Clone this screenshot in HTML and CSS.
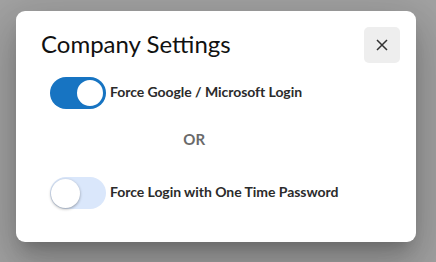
FILE: index.html
```html
<!DOCTYPE html>
<html lang="en">
<head>
    <meta charset="UTF-8">
    <meta name="viewport" content="width=device-width, initial-scale=1.0">
    <title>Company Settings</title>
    <link rel="stylesheet" href="styles.css">
</head>
<body>
    <div class="modal">
        <div class="modal-header">
            <h2>Company Settings</h2>
            <button class="btn-close" aria-label="close">
                <svg width="12" height="12" viewBox="0 0 12 12">
                    <path d="M1 1 L11 11 M11 1 L1 11" stroke="#333" stroke-width="1.5" fill="none"/>
                </svg>
            </button>
        </div>
        <div class="options">
            <label class="row">
                <span class="switch on"><span class="thumb"></span></span>
                <span class="label">Force Google / Microsoft Login</span>
            </label>
            <p class="or">OR</p>
            <label class="row">
                <span class="switch"><span class="thumb"></span></span>
                <span class="label">Force Login with One Time Password</span>
            </label>
        </div>
    </div>
</body>
</html>
```

FILE: styles.css
```css
body {
    margin: 0;
    padding: 11px 0 0 16px;
    background-color: #a2a2a2;
    font-family: Lato, "Liberation Sans", sans-serif;
    min-height: 262px;
    box-sizing: border-box;
}

.modal {
    width: 400px;
    box-sizing: border-box;
    background-color: #fff;
    border-radius: 9px;
    padding: 16px 16px 33px 24px;
    box-shadow: 0 11px 15px -7px rgba(0, 0, 0, 0.2), 0 24px 38px 3px rgba(0, 0, 0, 0.14), 0 9px 46px 8px rgba(0, 0, 0, 0.12);
}

.modal-header {
    display: flex;
    justify-content: space-between;
    align-items: center;
    height: 36px;
}

.modal-header h2 {
    margin: 0 0 0 1px;
    padding-bottom: 4px;
    font-size: 24px;
    font-weight: 400;
    color: #111;
}

.btn-close {
    width: 36px;
    height: 36px;
    border: none;
    border-radius: 5px;
    background-color: #eeeeee;
    display: flex;
    align-items: center;
    justify-content: center;
    padding: 0;
    cursor: pointer;
}

.options {
    display: inline-flex;
    flex-direction: column;
    margin: 14px 0 0 10px;
}

.row {
    display: flex;
    align-items: center;
    gap: 4px;
    cursor: pointer;
}

.switch {
    width: 56px;
    height: 32px;
    border-radius: 16px;
    background-color: #dae7fb;
    display: flex;
    align-items: center;
    padding: 0 1px;
    box-sizing: border-box;
}

.switch .thumb {
    width: 29px;
    height: 29px;
    border-radius: 50%;
    background-color: #fff;
    box-shadow: 0 1px 3px rgba(0, 0, 0, 0.35);
}

.switch.on {
    background-color: #1774c2;
    justify-content: flex-end;
}

.switch.on .thumb {
    box-sizing: border-box;
    width: 30px;
    height: 30px;
    border: 2px solid #1774c2;
    box-shadow: none;
}

.label {
    padding-bottom: 3px;
    font-size: 14px;
    font-weight: 700;
    letter-spacing: -0.05px;
    color: #2b2b2b;
}

.or {
    margin: 20px 0 28px;
    line-height: 20px;
    text-align: center;
    font-size: 15px;
    font-weight: 700;
    color: #6a6a6a;
}
```
